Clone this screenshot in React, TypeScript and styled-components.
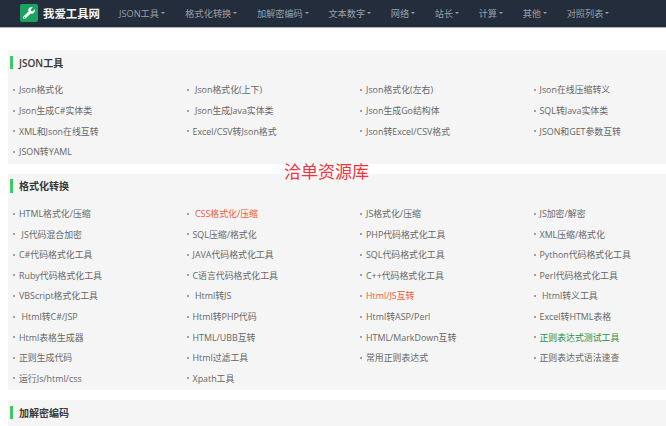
import React from 'react'
import styled, { createGlobalStyle } from 'styled-components'
import { FaWrench } from 'react-icons/fa'

const navItems = ['JSON工具', '格式化转换', '加解密编码', '文本数字', '网络', '站长', '计算', '其他', '对照列表']

type Tool = { name: string; indent?: boolean; tone?: 'red' | 'green' }

const jsonTools: Tool[] = [
  { name: 'Json格式化' },
  { name: 'Json格式化(上下)', indent: true },
  { name: 'Json格式化(左右)' },
  { name: 'Json在线压缩转义' },
  { name: 'Json生成C#实体类' },
  { name: 'Json生成Java实体类', indent: true },
  { name: 'Json生成Go结构体' },
  { name: 'SQL转Java实体类' },
  { name: 'XML和Json在线互转' },
  { name: 'Excel/CSV转Json格式' },
  { name: 'Json转Excel/CSV格式' },
  { name: 'JSON和GET参数互转' },
  { name: 'JSON转YAML' },
]

const formatTools: Tool[] = [
  { name: 'HTML格式化/压缩' },
  { name: 'CSS格式化/压缩', indent: true, tone: 'red' },
  { name: 'JS格式化/压缩' },
  { name: 'JS加密/解密' },
  { name: 'JS代码混合加密', indent: true },
  { name: 'SQL压缩/格式化' },
  { name: 'PHP代码格式化工具' },
  { name: 'XML压缩/格式化' },
  { name: 'C#代码格式化工具' },
  { name: 'JAVA代码格式化工具' },
  { name: 'SQL代码格式化工具' },
  { name: 'Python代码格式化工具' },
  { name: 'Ruby代码格式化工具' },
  { name: 'C语言代码格式化工具' },
  { name: 'C++代码格式化工具' },
  { name: 'Perl代码格式化工具' },
  { name: 'VBScript格式化工具' },
  { name: 'Html转JS', indent: true },
  { name: 'Html/JS互转', tone: 'red' },
  { name: 'Html转义工具', indent: true },
  { name: 'Html转C#/JSP', indent: true },
  { name: 'Html转PHP代码' },
  { name: 'Html转ASP/Perl' },
  { name: 'Excel转HTML表格' },
  { name: 'Html表格生成器' },
  { name: 'HTML/UBB互转' },
  { name: 'HTML/MarkDown互转' },
  { name: '正则表达式测试工具', tone: 'green' },
  { name: '正则生成代码' },
  { name: 'Html过滤工具' },
  { name: '常用正则表达式' },
  { name: '正则表达式语法速查' },
  { name: '运行Js/html/css' },
  { name: 'Xpath工具' },
]

function ToolPanel({ title, tools }: { title: string; tools: Tool[] }) {
  return (
    <Panel>
      <PanelTitle>{title}</PanelTitle>
      <ToolGrid>
        {tools.map((t) => (
          <ToolItem key={t.name}>
            <ToolLink $indent={t.indent} $tone={t.tone} href="#">
              {t.name}
            </ToolLink>
          </ToolItem>
        ))}
      </ToolGrid>
    </Panel>
  )
}

export default function App() {
  return (
    <Page>
      <GlobalStyle />
      <NavBar>
        <Brand href="#">
          <LogoBox>
            <FaWrench size={12} color="#fff" />
          </LogoBox>
          <BrandName>我爱工具网</BrandName>
        </Brand>
        <NavList>
          {navItems.map((n) => (
            <NavItem key={n} href="#">
              {n}
              <Caret />
            </NavItem>
          ))}
        </NavList>
      </NavBar>
      <Content>
        <ToolPanel title="JSON工具" tools={jsonTools} />
        <ToolPanel title="格式化转换" tools={formatTools} />
        <ToolPanel title="加解密编码" tools={[]} />
        <Watermark>洽单资源库</Watermark>
      </Content>
    </Page>
  )
}

const GlobalStyle = createGlobalStyle`
  html, body {
    margin: 0;
    padding: 0;
    background: #fff;
  }
  body {
    font-family: "Open Sans", "Noto Sans CJK SC", sans-serif;
  }
`

const Page = styled.div`
  width: 666px;
  height: 426px;
  overflow: hidden;
`

const NavBar = styled.nav`
  display: flex;
  align-items: center;
  box-sizing: border-box;
  height: 28px;
  padding: 0 0 1px 20px;
  background-color: #232d3b;
  border-bottom: 1px solid #a9b1ba;
`

const Brand = styled.a`
  display: flex;
  align-items: center;
  gap: 5px;
  width: 99px;
  text-decoration: none;
`

const LogoBox = styled.span`
  display: flex;
  align-items: center;
  justify-content: center;
  width: 18px;
  height: 18px;
  border-radius: 2px;
  background-color: #1aa25f;
`

const BrandName = styled.span`
  font-size: 11.4px;
  font-weight: 700;
  color: #f4f5f6;
  white-space: nowrap;
`

const NavList = styled.div`
  display: flex;
  align-items: center;
  gap: 19.6px;
`

const NavItem = styled.a`
  display: flex;
  align-items: center;
  font-size: 9.2px;
  color: #97a0aa;
  text-decoration: none;
  white-space: nowrap;
  &:first-child {
    padding-right: 0.8px;
  }
`

const Caret = styled.span`
  width: 0;
  height: 0;
  margin-left: 2px;
  border-top: 2.5px solid #97a0aa;
  border-left: 2.5px solid transparent;
  border-right: 2.5px solid transparent;
`

const Content = styled.main`
  position: relative;
  display: flex;
  flex-direction: column;
  gap: 10px;
  padding: 22px 0 0 8px;
`

const Panel = styled.section`
  padding: 5px 0 1.5px;
  background-color: #f5f5f5;
`

const PanelTitle = styled.h2`
  display: flex;
  align-items: center;
  height: 13.5px;
  margin: 0.5px 0 10.7px 2px;
  padding-left: 6px;
  border-left: 3px solid #3fc766;
  font-size: 10px;
  font-weight: 600;
  color: #3a3a3a;
`

const ToolGrid = styled.ul`
  display: grid;
  grid-template-columns: repeat(4, 173.5px);
  grid-auto-rows: 20.6px;
  margin: 0;
  padding: 0;
  list-style: none;
`

const ToolItem = styled.li`
  display: flex;
  align-items: center;
  padding-left: 5px;
  &::before {
    content: '';
    flex: none;
    width: 2px;
    height: 2px;
    margin-right: 4px;
    background-color: #a0a0a0;
  }
`

const toneColors = { red: '#f2583a', green: '#2f8f3f' }

const ToolLink = styled.a<{ $indent?: boolean; $tone?: 'red' | 'green' }>`
  padding-left: ${(p) => (p.$indent ? '2.5px' : '0')};
  font-size: 8.9px;
  color: ${(p) => (p.$tone ? toneColors[p.$tone] : '#666')};
  text-decoration: none;
  white-space: nowrap;
`

const Watermark = styled.div`
  position: absolute;
  left: 284px;
  top: 132px;
  font-size: 17px;
  line-height: 24px;
  color: #f5333f;
  white-space: nowrap;
`
